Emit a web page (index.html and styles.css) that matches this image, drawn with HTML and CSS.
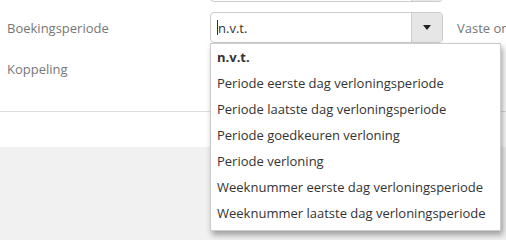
FILE: index.html
```html
<!DOCTYPE html>
<html lang="nl">
<head>
    <meta charset="UTF-8">
    <title>Looncomponent</title>
    <link rel="stylesheet" href="styles.css">
</head>
<body>
    <div class="panel">
        <div class="fields">
            <div class="row">
                <label class="label"></label>
                <div class="combo">
                    <div class="combo-input"></div>
                    <div class="combo-btn"></div>
                </div>
            </div>
            <div class="row">
                <label class="label">Boekingsperiode</label>
                <div class="combo-wrap">
                    <div class="combo">
                        <div class="combo-input"><span class="cursor"></span>n.v.t.</div>
                        <div class="combo-btn"><span class="caret"></span></div>
                    </div>
                    <ul class="dropdown">
                        <li class="selected">n.v.t.</li>
                        <li>Periode eerste dag verloningsperiode</li>
                        <li>Periode laatste dag verloningsperiode</li>
                        <li>Periode goedkeuren verloning</li>
                        <li>Periode verloning</li>
                        <li>Weeknummer eerste dag verloningsperiode</li>
                        <li>Weeknummer laatste dag verloningsperiode</li>
                    </ul>
                </div>
                <span class="hint">Vaste omschrijving</span>
            </div>
            <div class="row">
                <label class="label">Koppeling</label>
            </div>
        </div>
    </div>
</body>
</html>
```

FILE: styles.css
```css
html, body {
    margin: 0;
    padding: 0;
    overflow: hidden;
    background: #f1f1f1;
}
body {
    font-family: "Open Sans", Arial, sans-serif;
    font-size: 13px;
    color: #333;
    width: 506px;
    height: 240px;
}
.panel {
    background: #fff;
    margin-top: -34px;
    padding-bottom: 35px;
}
.fields {
    padding-bottom: 22px;
    border-bottom: 1px solid #ddd;
}
.row {
    display: flex;
    align-items: center;
    height: 41px;
}
.label {
    width: 203px;
    padding-left: 7px;
    color: #777;
    flex-shrink: 0;
}
.combo-wrap {
    position: relative;
}
.combo {
    display: flex;
    width: 231px;
    height: 29px;
    border: 1px solid #ccc;
    border-radius: 4px;
}
.combo-input {
    flex: 1;
    display: flex;
    align-items: center;
    padding-left: 6px;
    color: #333;
}
.cursor {
    display: inline-block;
    width: 1px;
    height: 15px;
    background: #333;
}
.combo-btn {
    width: 30px;
    border-left: 1px solid #ccc;
    background: #e6e6e6;
    border-radius: 0 3px 3px 0;
    display: flex;
    align-items: center;
    justify-content: center;
}
.caret {
    width: 0;
    height: 0;
    border-left: 4px solid transparent;
    border-right: 4px solid transparent;
    border-top: 5px solid #222;
}
.hint {
    margin-left: 14px;
    color: #777;
    white-space: nowrap;
}
.dropdown {
    position: absolute;
    top: 31px;
    left: 0;
    width: 289px;
    margin: 0;
    padding: 0 0 4px 0;
    list-style: none;
    background: #fff;
    border: 1px solid #ccc;
    box-shadow: 2px 4px 6px rgba(0, 0, 0, 0.35);
    z-index: 10;
}
.dropdown li {
    height: 26px;
    line-height: 26px;
    padding-left: 6px;
    white-space: nowrap;
    color: #333;
}
.dropdown li.selected {
    font-weight: bold;
}
```
